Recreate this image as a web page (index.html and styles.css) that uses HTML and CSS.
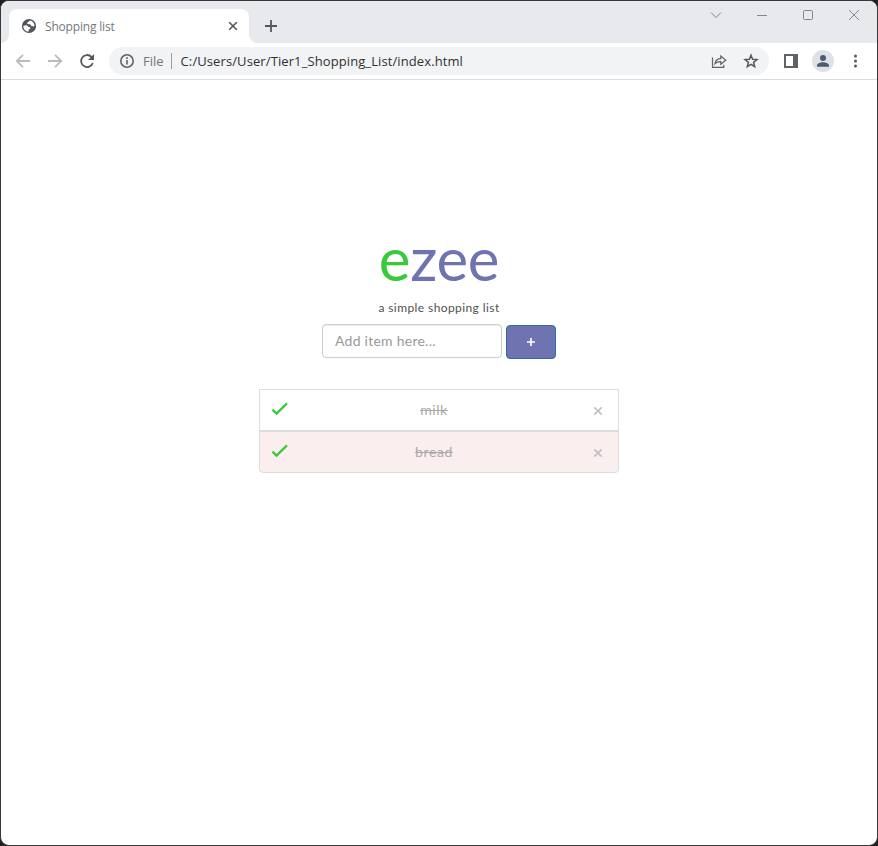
FILE: index.html
```html
<!DOCTYPE html>
<html lang="en">
<head>
<meta charset="utf-8">
<title>Shopping list</title>
<link rel="stylesheet" href="styles.css">
</head>
<body>
<div class="window">
  <header class="tabstrip">
    <div class="tab">
      <svg class="globe" width="16" height="16" viewBox="0 0 16 16"><circle cx="8" cy="8" r="7.1" fill="#53575b"/><path d="M2.3 8.1 4.6 7.2 6.2 7.6 7.4 8.9 9.5 9.2 9.2 10.8 7.8 11.4 7.4 13.7C4.4 13.4 2.2 11 2.3 8.1ZM8.8 2.4 7.4 3.9 6.2 4.4 6.4 5.9 9.1 6.3 10.4 7.9 12.4 8.4 13.6 7.5C13.3 4.8 11.4 2.8 8.8 2.4Z" fill="#fff"/></svg>
      <span class="tab-title">Shopping list</span>
      <svg width="10" height="10" viewBox="0 0 10 10" fill="none" stroke="#54585c" stroke-width="1.6"><path d="m1.2 1.2 7.6 7.6M8.8 1.2 1.2 8.8"/></svg>
    </div>
    <svg class="new-tab" width="14" height="14" viewBox="0 0 14 14" fill="none" stroke="#54585c" stroke-width="1.8"><path d="M7 1v12M1 7h12"/></svg>
    <div class="controls">
      <svg width="12" height="12" viewBox="0 0 12 12"><path d="m1 3.5 5 5 5-5"/></svg>
      <svg width="12" height="12" viewBox="0 0 12 12"><path d="M1 6.5h10"/></svg>
      <svg width="12" height="12" viewBox="0 0 12 12"><rect x="1.5" y="1.5" width="9" height="9" rx="1"/></svg>
      <svg width="12" height="12" viewBox="0 0 12 12"><path d="m1 1 10 10M11 1 1 11"/></svg>
    </div>
  </header>
  <nav class="toolbar">
    <div class="navigation">
      <svg width="16" height="16" viewBox="0 0 16 16" class="muted"><path d="M15 8H2M8 1.8 1.8 8 8 14.2"/></svg>
      <svg width="16" height="16" viewBox="0 0 16 16" class="muted"><path d="M1 8h13M8 1.8 14.2 8 8 14.2"/></svg>
      <svg width="16" height="16" viewBox="0 0 16 16" class="reload"><path d="M13.8 10A6 6 0 1 1 12.4 3.8L13.6 5.2"/><path d="M15 1v6H9z" fill="#54585c" stroke="none"/></svg>
    </div>
    <div class="address">
      <svg width="16" height="16" viewBox="0 0 16 16" fill="none" stroke="#5f6368" stroke-width="1.6"><circle cx="8" cy="8" r="6.2"/><path d="M8 7v4.5M8 4.3v1.6"/></svg>
      <span class="scheme">File</span><span class="divider"></span>
      <span class="url">C:/Users/User/Tier1_Shopping_List/index.html</span>
      <svg width="16" height="16" viewBox="0 0 16 16" fill="none" stroke="#5f6368" stroke-width="1.2"><path d="M1.5 4.5v9.9h11.3v-2.6M4 10.7c.6-3.6 2.7-5 5.8-5V3l5 4.2-5 4V8.6C7.2 8.5 5.5 9 4 10.7Z"/></svg>
      <svg class="star" width="16" height="16" viewBox="0 0 16 16" fill="none" stroke="#54585c" stroke-width="1.5"><path d="m8 2.2 1.6 4 4.4.4-3.4 2.8 1.1 4.3L8 11.4l-3.7 2.3 1.1-4.3L2 6.6l4.4-.4Z"/></svg>
    </div>
    <svg class="panel" width="14" height="14" viewBox="0 0 14 14"><path fill="#5f6368" fill-rule="evenodd" d="M0 0h14v14H0zM2 2v10h7V2z"/></svg>
    <svg class="profile" width="22" height="22" viewBox="0 0 22 22"><circle cx="11" cy="11" r="11" fill="#dee1e6"/><circle cx="11" cy="8" r="3" fill="#4d5b70"/><path d="M5 16.8v-1.3c0-2.3 3.7-3.3 6-3.3s6 1 6 3.3v1.3z" fill="#4d5b70"/></svg>
    <svg class="more" width="4" height="14" viewBox="0 0 4 14" fill="#54585c"><circle cx="1.5" cy="2" r="1.5"/><circle cx="1.5" cy="7" r="1.5"/><circle cx="1.5" cy="12" r="1.5"/></svg>
  </nav>
  <main>
    <h1><span class="initial">e</span>zee</h1>
    <p class="tagline">a simple shopping list</p>
    <form class="add-form">
      <input type="text" placeholder="Add item here..." aria-label="Add item">
      <button type="button"><svg width="8" height="8" viewBox="0 0 8 8" stroke="#fff" stroke-width="1.7"><path d="M4 0v8M0 4h8"/></svg></button>
    </form>
    <ul class="list">
      <li><svg class="check" width="18" height="14" viewBox="0 0 18 14"><path d="m1.5 7.6 4 4L16 1.4"/></svg><span>milk</span><svg class="remove" width="10" height="10" viewBox="0 0 10 10"><path d="m1.3 1.3 7.4 7.4M8.7 1.3 1.3 8.7"/></svg></li>
      <li><svg class="check" width="18" height="14" viewBox="0 0 18 14"><path d="m1.5 7.6 4 4L16 1.4"/></svg><span>bread</span><svg class="remove" width="10" height="10" viewBox="0 0 10 10"><path d="m1.3 1.3 7.4 7.4M8.7 1.3 1.3 8.7"/></svg></li>
    </ul>
  </main>
</div>
</body>
</html>
```
FILE: styles.css
```css
* { box-sizing: border-box; }
body { margin: 0; background: #202022; font-family: "Open Sans", sans-serif; }
svg { display: block; flex: none; }
.window { height: 846px; border: 1px solid #38383b; border-radius: 9px; background: #fff; overflow: hidden; display: flex; flex-direction: column; }
.tabstrip { height: 42px; background: #e8e9ed; display: flex; padding: 8px 17px 0 8px; }
.tab { position: relative; width: 240px; height: 34px; background: #fff; border-radius: 8px 8px 0 0; display: flex; align-items: center; padding: 0 11px 0 12px; }
.tab::before, .tab::after { content: ""; position: absolute; bottom: 0; width: 8px; height: 8px; }
.tab::before { left: -8px; background: radial-gradient(circle at 0 0, transparent 7.5px, #fff 8px); }
.tab::after { right: -8px; background: radial-gradient(circle at 100% 0, transparent 7.5px, #fff 8px); }
.tab-title { flex: 1; margin-left: 8px; font-size: 12px; color: #74777a; letter-spacing: -.18px; }
.new-tab { margin: 10px 0 0 15px; }
.controls { margin-left: auto; display: flex; gap: 34px; height: 12px; }
.controls svg { fill: none; stroke: #85868a; stroke-width: 1; }
.toolbar { height: 37px; border-bottom: 1px solid #dadce0; display: flex; align-items: center; padding-left: 14px; }
.navigation { display: flex; gap: 16px; margin-right: 14px; }
.navigation svg { fill: none; stroke-width: 1.8; }
.muted { stroke: #b9bbbe; }
.reload { stroke: #54585c; }
.address { flex: none; width: 660px; height: 28px; border-radius: 14px; background: #f1f3f4; display: flex; align-items: center; padding: 0 10px; font-size: 13px; }
.scheme { color: #72767a; margin-left: 8px; }
.divider { width: 1px; height: 16px; background: #9b9ea2; margin: 0 9px 0 7px; }
.url { color: #303236; flex: 1; white-space: nowrap; letter-spacing: .1px; }
.star { margin-left: 16px; }
.panel { margin-left: 15px; }
.profile { margin-left: 14px; }
.more { margin-left: 20px; }
main { display: flex; flex-direction: column; align-items: center; padding-top: 140px; font-family: Lato, sans-serif; }
h1 { margin: 0; height: 76px; font-size: 60px; line-height: 76px; font-weight: 400; color: #6f73b2; letter-spacing: -.3px; }
.initial { color: #36cb37; }
.tagline { margin: 0 0 4px; height: 24px; line-height: 24px; font-size: 12px; color: #505050; letter-spacing: .41px; }
.add-form { display: flex; gap: 4px; }
input { width: 180px; height: 34px; border: 1px solid #ccc; border-radius: 4px; padding: 0 12px 2px; font: 14px Lato, sans-serif; box-shadow: inset 0 1px 1px #00000013; letter-spacing: .25px; }
input::placeholder { color: #999; }
button { width: 50px; height: 34px; margin-top: 1px; border: 1px solid #2e6da4; border-radius: 4px; background: #6f73b2; padding: 0; display: flex; align-items: center; justify-content: center; }
.list { list-style: none; margin: 30px 0 0; padding: 0; width: 360px; }
li { height: 42px; border: 1px solid #ddd; display: flex; align-items: center; padding: 0 15px 0 11px; font-size: 14px; color: #aaa; letter-spacing: .6px; }
li span { flex: 1; padding: 0 10px 1px 0; text-align: center; text-decoration: line-through; margin-left: -4px; }
li:last-child { background: #fbeeef; border-radius: 0 0 4px 4px; }
.check { fill: none; stroke: #36cb37; stroke-width: 2.2; margin-bottom: 2px; }
.remove { fill: none; stroke: #c0c0c2; stroke-width: 1.7; margin-top: 2px; }
```
